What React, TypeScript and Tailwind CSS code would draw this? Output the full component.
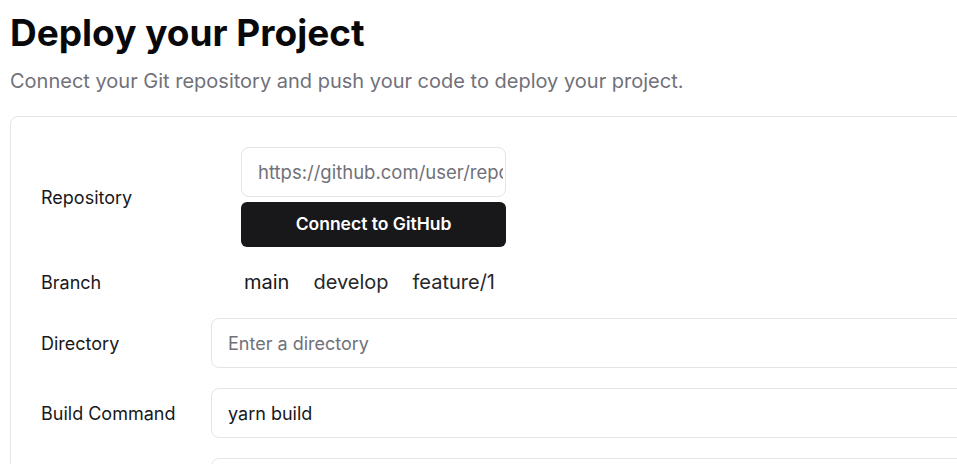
import { useState } from "react"

const branches = ["main", "develop", "feature/1"]

const App: React.FC = () => {
  const [repo, setRepo] = useState<string>("")
  const [branch, setBranch] = useState<string>("main")
  const [directory, setDirectory] = useState<string>("")
  const [buildCommand, setBuildCommand] = useState<string>("yarn build")

  return (
    <div
      className="min-h-screen bg-white px-[10px] pt-[11px] text-[#09090b]"
      style={{ fontFamily: "Inter, 'Noto Sans', sans-serif" }}
    >
      <h1 className="text-[37px] font-bold leading-[44px]">Deploy your Project</h1>
      <p className="mt-[12px] text-[20px] leading-[28px] text-[#71717a]">
        Connect your Git repository and push your code to deploy your project.
      </p>

      <div className="mt-[21px] w-[1100px] rounded-lg border border-[#e4e4e7] p-[30px]">
        <div className="grid grid-cols-[170px_1fr] items-center gap-y-5">
          <label className="text-[18px] text-[#18181b]">Repository</label>
          <div className="ml-[30px] flex w-[265px] flex-col gap-[5px]">
            <input
              value={repo}
              onChange={(e) => setRepo(e.target.value)}
              placeholder="https://github.com/user/repo"
              className="h-[50px] w-full rounded-lg border border-[#e4e4e7] pl-4 pr-[2px] text-[18.5px] text-[#18181b] placeholder:text-[#71717a] focus:outline-none"
            />
            <button className="h-[45px] w-full rounded-md bg-[#18181b] text-[17.5px] font-semibold text-white">
              Connect to GitHub
            </button>
          </div>

          <label className="text-[18px] text-[#18181b]">Branch</label>
          <div className="ml-[33px] flex h-[31px] items-center gap-[24px]">
            {branches.map((b) => (
              <button
                key={b}
                onClick={() => setBranch(b)}
                className={`text-[20px] leading-[31px] ${
                  branch === b ? "text-[#18181b]" : "text-[#27272a]"
                }`}
              >
                {b}
              </button>
            ))}
          </div>

          <label className="text-[18px] text-[#18181b]">Directory</label>
          <input
            value={directory}
            onChange={(e) => setDirectory(e.target.value)}
            placeholder="Enter a directory"
            className="h-[50px] w-full rounded-lg border border-[#e4e4e7] px-4 text-[18px] text-[#18181b] placeholder:text-[#71717a] focus:outline-none"
          />

          <label className="text-[18px] text-[#18181b]">Build Command</label>
          <input
            value={buildCommand}
            onChange={(e) => setBuildCommand(e.target.value)}
            className="h-[50px] w-full rounded-lg border border-[#e4e4e7] px-4 text-[18px] text-[#18181b] focus:outline-none"
          />

          <label className="text-[18px] text-[#18181b]">Output Directory</label>
          <input
            placeholder="dist"
            className="h-[50px] w-full rounded-lg border border-[#e4e4e7] px-4 text-[18px] text-[#18181b] placeholder:text-[#71717a] focus:outline-none"
          />
        </div>
      </div>
    </div>
  )
}

export default App
